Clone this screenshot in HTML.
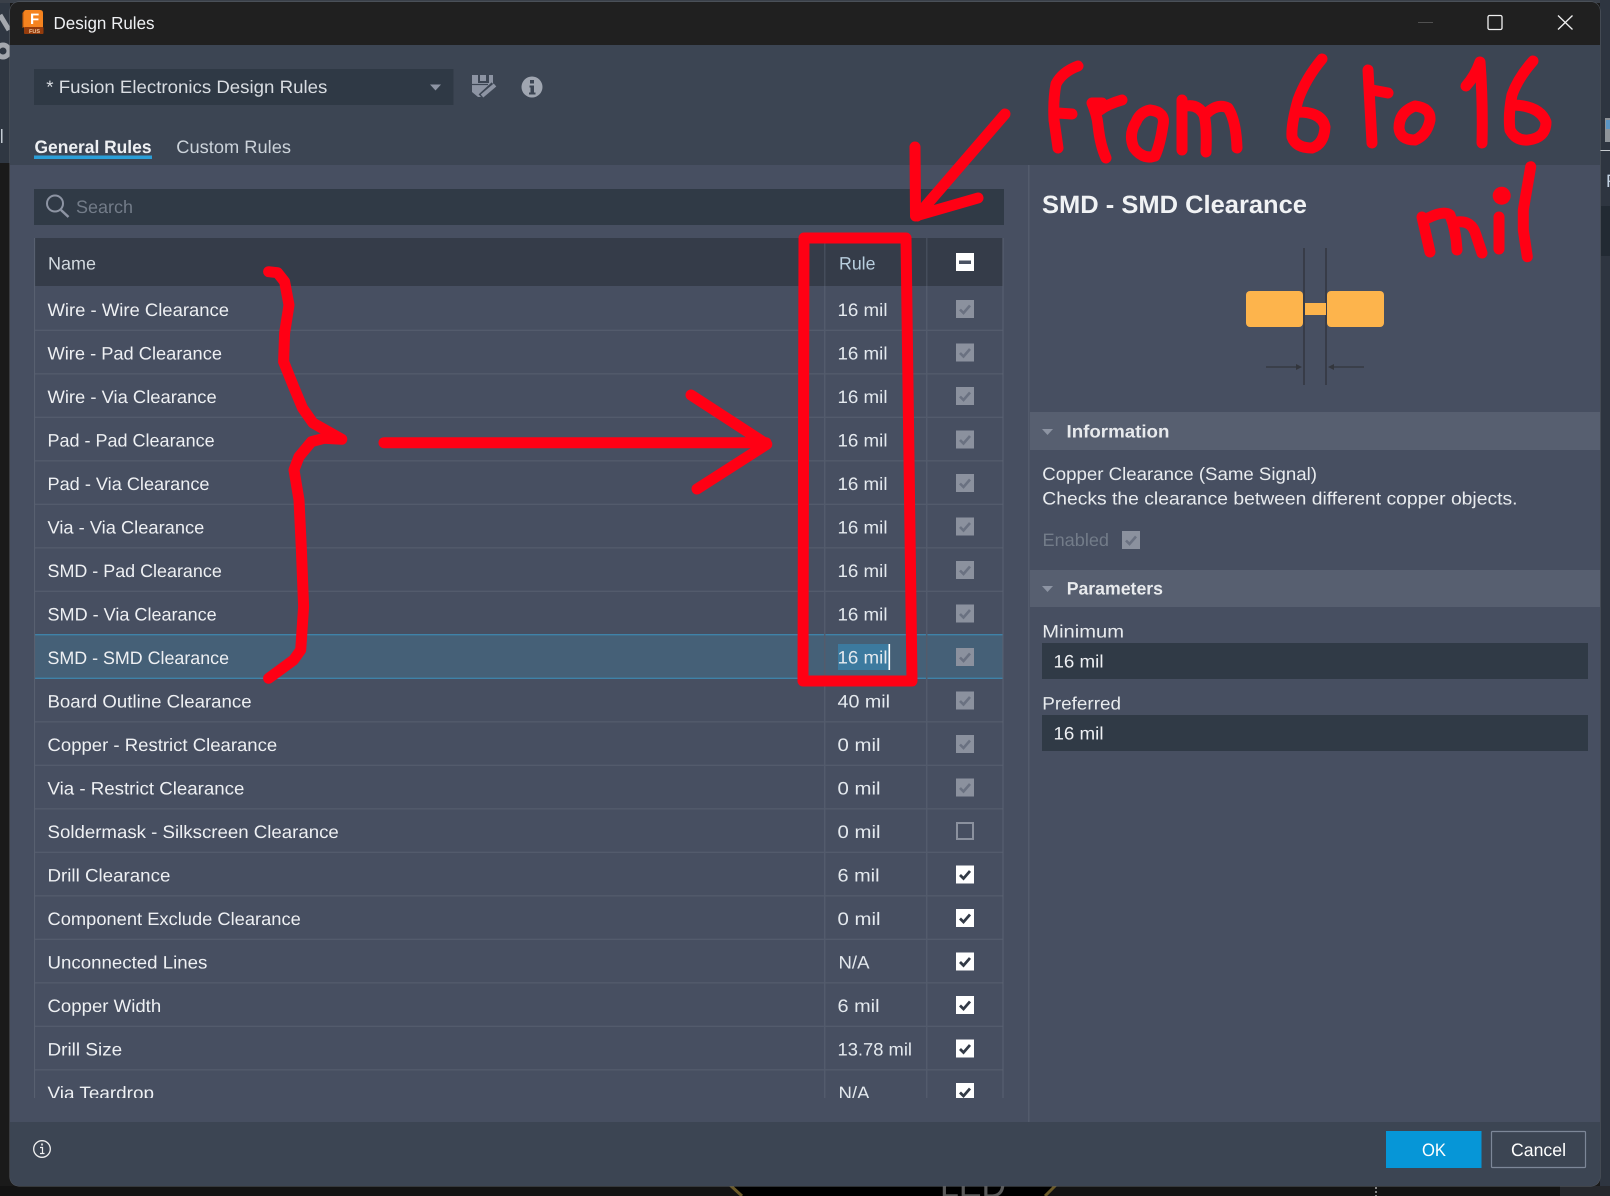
<!DOCTYPE html>
<html lang="en">
<head>
<meta charset="utf-8">
<title>Design Rules</title>
<style>
html,body{margin:0;padding:0;width:1610px;height:1196px;overflow:hidden;background:#1a1a1a}
svg{display:block}
text{font-family:"Liberation Sans",sans-serif;font-size:18px;fill:#eef0f3;text-rendering:geometricPrecision}
.b{font-weight:bold}
.v{fill:#e4e9ee}
.red{fill:none;stroke:#ff0014;stroke-width:11;stroke-linecap:round;stroke-linejoin:round}
.dis{fill:#8b919e}
.chk{fill:none;stroke:#6a7181;stroke-width:2.6}
.on{fill:#fff}
.chk2{fill:none;stroke:#323a46;stroke-width:2.8}
</style>
</head>
<body>
<svg xmlns="http://www.w3.org/2000/svg" width="1610" height="1196" viewBox="0 0 1610 1196">
<defs>
<clipPath id="dlg"><rect x="10" y="2" width="1590" height="1184" rx="9"/></clipPath>
<g id="d"><rect class="dis" x="956" y="0" width="18" height="18"/><path class="chk" d="M960 9.5L963.5 13L970 5.5"/></g>
<g id="c"><rect class="on" x="956" y="0" width="18" height="18"/><path class="chk2" d="M960 9.5L963.5 13L970 5.5"/></g>
</defs>

<!-- background behind the dialog -->
<rect width="1610" height="1196" fill="#1a1a1a"/>
<rect x="0" y="0" width="10" height="163" fill="#2f3742"/>
<rect x="0" y="0" width="1610" height="3" fill="#3a4049"/>
<path d="M0 15L9 30" stroke="#a4a8ae" stroke-width="5" fill="none"/>
<circle cx="3" cy="51" r="6" fill="none" stroke="#a4a8ae" stroke-width="5"/>
<rect x="1" y="129" width="1.5" height="14" fill="#c4ccd4"/>
<rect x="1600" y="0" width="10" height="1196" fill="#2e3540"/>
<rect x="1605" y="118" width="5" height="24" fill="#8f9499"/>
<rect x="1606" y="120" width="4" height="9" fill="#5b95c4"/>
<rect x="1600" y="150" width="10" height="1" fill="#c8ccd0"/>
<text x="1606" y="187" style="font-size:18px;fill:#c4d4e4">F</text>
<rect x="1601" y="206" width="9" height="50" fill="#222a33"/>
<rect x="1560" y="1186" width="50" height="10" fill="#26282d"/>
<rect x="0" y="1186" width="1560" height="10" fill="#131313"/>
<path d="M730 1186H1056L1045 1196H742Z" fill="#000"/>
<path d="M730 1185L742 1196M1056 1185L1045 1196" stroke="#6b5a28" stroke-width="3" fill="none"/>
<text x="940" y="1197" textLength="66" lengthAdjust="spacingAndGlyphs" style="font-size:36px;fill:#5a5a5a">LED</text>
<path d="M1376 1187V1196" stroke="#cfcfcf" stroke-width="1.2" stroke-dasharray="2 2" fill="none"/>
<rect x="9.5" y="1.5" width="1591" height="1185" rx="9.5" fill="#5a5f66"/>

<g clip-path="url(#dlg)">
<rect x="10" y="2" width="1590" height="1184" fill="#3c4553"/>
<rect x="10" y="2" width="1590" height="43" fill="#202020"/>
<rect x="10" y="165" width="1590" height="957" fill="#474f61"/>
<rect x="10" y="1122" width="1590" height="64" fill="#3c4553"/>
</g>

<!-- title bar -->
<path d="M24 12Q24 10 26 10H40Q43 10 43 13V28H24Z" fill="#f5831f"/>
<path d="M22.500 13L24 11V27L22.500 28Z" fill="#d96a12"/>
<rect x="24" y="27" width="19.500" height="7" rx="1" fill="#953c0c"/>
<text x="30" y="24" class="b" style="font-size:15px;fill:#fff">F</text>
<text x="29" y="33" class="b" style="font-size:5.500px;fill:#f0c8a0">FUS</text>
<text x="53.500" y="28.800" textLength="101" lengthAdjust="spacingAndGlyphs" style="font-size:17.500px">Design Rules</text>
<path d="M1418 22.500H1433" stroke="#505050" stroke-width="1"/>
<rect x="1488" y="15.500" width="14" height="14" rx="1.500" fill="none" stroke="#f0f0f0" stroke-width="1.300"/>
<path d="M1558 15.500L1572.500 29.500M1572.500 15.500L1558 29.500" stroke="#f0f0f0" stroke-width="1.300" fill="none"/>

<!-- toolbar -->
<rect x="34" y="69" width="419.500" height="36" fill="#2f3945"/>
<text x="46.300" y="93" textLength="281" lengthAdjust="spacingAndGlyphs" style="fill:#d9dde2">* Fusion Electronics Design Rules</text>
<path d="M430 84.500H441L435.500 90.500Z" fill="#8d94a3"/>
<path d="M472 75H493V86L483 97H478L472 92Z" fill="#8d94a3"/>
<rect x="478" y="75" width="11" height="8" fill="#3c4553"/>
<rect x="480" y="75" width="6" height="6" fill="#8d94a3"/>
<path d="M472 84.500H488" stroke="#3c4553" stroke-width="1.200" fill="none"/>
<path d="M481 97L494 85" stroke="#3c4553" stroke-width="7" fill="none"/>
<path d="M482 96L495 85" stroke="#8d94a3" stroke-width="4" fill="none"/>
<circle cx="532" cy="87" r="10.500" fill="#a0a6b1"/>
<rect x="530" y="80" width="4" height="3.500" fill="#3c4553"/>
<path d="M529.500 85.500H534V92.500H535.500V94.500H529V92.500H530.500V87.500H529.500Z" fill="#3c4553"/>

<!-- tabs -->
<text x="34.500" y="153" class="b" textLength="117" lengthAdjust="spacingAndGlyphs">General Rules</text>
<rect x="34" y="155.500" width="118" height="3.500" fill="#2b9fd8"/>
<text x="176.300" y="153" textLength="114.700" lengthAdjust="spacingAndGlyphs" style="fill:#ccd3da">Custom Rules</text>

<!-- search -->
<rect x="34" y="189" width="970" height="36" fill="#303a46"/>
<circle cx="55" cy="203.500" r="8" fill="none" stroke="#8d94a3" stroke-width="2"/>
<path d="M61 210L68.500 217" stroke="#8d94a3" stroke-width="2.500" fill="none"/>
<text x="76" y="213" textLength="57" lengthAdjust="spacingAndGlyphs" style="fill:#737c89">Search</text>

<!-- table header -->
<rect x="35" y="238" width="968" height="48" fill="#353c49"/>
<rect x="824" y="238" width="1.500" height="48" fill="#454d5b"/>
<rect x="926" y="238" width="1.500" height="48" fill="#454d5b"/>
<text x="48" y="269.300" textLength="48" lengthAdjust="spacingAndGlyphs" style="fill:#d3dae0">Name</text>
<text x="839" y="269.300" textLength="36.500" lengthAdjust="spacingAndGlyphs" style="fill:#b9cfdf">Rule</text>
<rect class="on" x="956" y="253" width="18" height="18"/>
<rect x="959" y="260.500" width="12" height="3.500" fill="#4a5262"/>

<!-- selected row -->
<rect x="35" y="634.700" width="968" height="43.600" fill="#456077"/>

<!-- table lines -->
<path d="M35 330.300H1003M35 373.800H1003M35 417.300H1003M35 460.800H1003M35 504.300H1003M35 547.800H1003M35 591.300H1003M35 721.800H1003M35 765.300H1003M35 808.800H1003M35 852.300H1003M35 895.800H1003M35 939.300H1003M35 982.800H1003M35 1026.300H1003M35 1069.800H1003" stroke="#535b6c" stroke-width="1.400" fill="none"/>
<path d="M35 634.700H1003M35 678.300H1003" stroke="#3f82a8" stroke-width="1.400" fill="none"/>
<path d="M824.700 286V1098M926.700 286V1098" stroke="#535b6c" stroke-width="1.500" fill="none"/>
<path d="M34.600 238V1098M1003 238V1098" stroke="#5a6272" stroke-width="1" fill="none"/>

<!-- rows: names -->
<text x="47.500" y="316" textLength="181.500" lengthAdjust="spacingAndGlyphs">Wire - Wire Clearance</text>
<text x="47.500" y="359.500" textLength="174.500" lengthAdjust="spacingAndGlyphs">Wire - Pad Clearance</text>
<text x="47.500" y="403" textLength="169.200" lengthAdjust="spacingAndGlyphs">Wire - Via Clearance</text>
<text x="47.500" y="446.500" textLength="167.100" lengthAdjust="spacingAndGlyphs">Pad - Pad Clearance</text>
<text x="47.500" y="490" textLength="162" lengthAdjust="spacingAndGlyphs">Pad - Via Clearance</text>
<text x="47.500" y="533.500" textLength="156.800" lengthAdjust="spacingAndGlyphs">Via - Via Clearance</text>
<text x="47.500" y="577" textLength="174.300" lengthAdjust="spacingAndGlyphs">SMD - Pad Clearance</text>
<text x="47.500" y="620.500" textLength="169.200" lengthAdjust="spacingAndGlyphs">SMD - Via Clearance</text>
<text x="47.500" y="664" textLength="181.500" lengthAdjust="spacingAndGlyphs">SMD - SMD Clearance</text>
<text x="47.500" y="707.500" textLength="204.100" lengthAdjust="spacingAndGlyphs">Board Outline Clearance</text>
<text x="47.500" y="751" textLength="229.700" lengthAdjust="spacingAndGlyphs">Copper - Restrict Clearance</text>
<text x="47.500" y="794.500" textLength="196.900" lengthAdjust="spacingAndGlyphs">Via - Restrict Clearance</text>
<text x="47.500" y="838" textLength="291.300" lengthAdjust="spacingAndGlyphs">Soldermask - Silkscreen Clearance</text>
<text x="47.500" y="881.500" textLength="122.900" lengthAdjust="spacingAndGlyphs">Drill Clearance</text>
<text x="47.500" y="925" textLength="253.300" lengthAdjust="spacingAndGlyphs">Component Exclude Clearance</text>
<text x="47.500" y="968.500" textLength="159.900" lengthAdjust="spacingAndGlyphs">Unconnected Lines</text>
<text x="47.500" y="1012" textLength="113.700" lengthAdjust="spacingAndGlyphs">Copper Width</text>
<text x="47.500" y="1055.500" textLength="74.700" lengthAdjust="spacingAndGlyphs">Drill Size</text>
<text x="47.500" y="1099" textLength="106.500" lengthAdjust="spacingAndGlyphs">Via Teardrop</text>

<!-- rows: values -->
<text class="v" x="837.500" y="316" textLength="50" lengthAdjust="spacingAndGlyphs">16 mil</text>
<text class="v" x="837.500" y="359.500" textLength="50" lengthAdjust="spacingAndGlyphs">16 mil</text>
<text class="v" x="837.500" y="403" textLength="50" lengthAdjust="spacingAndGlyphs">16 mil</text>
<text class="v" x="837.500" y="446.500" textLength="50" lengthAdjust="spacingAndGlyphs">16 mil</text>
<text class="v" x="837.500" y="490" textLength="50" lengthAdjust="spacingAndGlyphs">16 mil</text>
<text class="v" x="837.500" y="533.500" textLength="50" lengthAdjust="spacingAndGlyphs">16 mil</text>
<text class="v" x="837.500" y="577" textLength="50" lengthAdjust="spacingAndGlyphs">16 mil</text>
<text class="v" x="837.500" y="620.500" textLength="50" lengthAdjust="spacingAndGlyphs">16 mil</text>
<rect x="838" y="644" width="51" height="26" fill="#3c7a9f"/>
<text class="v" x="837.500" y="663.500" textLength="50" lengthAdjust="spacingAndGlyphs">16 mil</text>
<rect x="888.500" y="644" width="1.600" height="26" fill="#fff"/>
<text class="v" x="837.500" y="707.500" textLength="52.500" lengthAdjust="spacingAndGlyphs">40 mil</text>
<text class="v" x="837.500" y="751" textLength="43" lengthAdjust="spacingAndGlyphs">0 mil</text>
<text class="v" x="837.500" y="794.500" textLength="43" lengthAdjust="spacingAndGlyphs">0 mil</text>
<text class="v" x="837.500" y="838" textLength="43" lengthAdjust="spacingAndGlyphs">0 mil</text>
<text class="v" x="837.500" y="881.500" textLength="42" lengthAdjust="spacingAndGlyphs">6 mil</text>
<text class="v" x="837.500" y="925" textLength="43" lengthAdjust="spacingAndGlyphs">0 mil</text>
<text class="v" x="838.500" y="968.500" textLength="31" lengthAdjust="spacingAndGlyphs">N/A</text>
<text class="v" x="837.500" y="1012" textLength="42" lengthAdjust="spacingAndGlyphs">6 mil</text>
<text class="v" x="837.500" y="1055.500" textLength="74.500" lengthAdjust="spacingAndGlyphs">13.78 mil</text>
<text class="v" x="838.500" y="1099" textLength="31" lengthAdjust="spacingAndGlyphs">N/A</text>

<!-- rows: checkboxes -->
<use href="#d" y="300"/>
<use href="#d" y="343.500"/>
<use href="#d" y="387"/>
<use href="#d" y="430.500"/>
<use href="#d" y="474"/>
<use href="#d" y="517.500"/>
<use href="#d" y="561"/>
<use href="#d" y="604.500"/>
<use href="#d" y="648"/>
<use href="#d" y="691.500"/>
<use href="#d" y="735"/>
<use href="#d" y="778.500"/>
<rect x="957" y="823" width="16" height="16" fill="none" stroke="#8b919e" stroke-width="2"/>
<use href="#c" y="865.500"/>
<use href="#c" y="909"/>
<use href="#c" y="952.500"/>
<use href="#c" y="996"/>
<use href="#c" y="1039.500"/>
<use href="#c" y="1083"/>

<!-- clip bottom of table -->
<rect x="11" y="1098" width="1017" height="24" fill="#474f61"/>

<!-- right panel -->
<rect x="1028" y="165" width="1.500" height="957" fill="#535b6c"/>
<text x="1042" y="213" class="b" textLength="265" lengthAdjust="spacingAndGlyphs" style="font-size:25px;fill:#f0f2f4">SMD - SMD Clearance</text>
<path d="M1304 248V385M1326 248V385" stroke="#2e3138" stroke-width="1.200" fill="none"/>
<rect x="1246" y="291" width="57" height="36" rx="4" fill="#fdb44c"/>
<rect x="1327" y="291" width="57" height="36" rx="4" fill="#fdb44c"/>
<rect x="1305" y="303" width="21" height="12" fill="#fdb44c"/>
<path d="M1266 367H1298M1331 367H1364" stroke="#33363d" stroke-width="1.200" fill="none"/>
<path d="M1296 364L1302 367L1296 370ZM1334 364L1328 367L1334 370Z" fill="#33363d"/>

<rect x="1030" y="412" width="570" height="38" fill="#575f70"/>
<path d="M1042 429H1053L1047.500 435Z" fill="#8d94a3"/>
<text x="1066.500" y="437.500" class="b" textLength="102.900" lengthAdjust="spacingAndGlyphs" style="fill:#e8eaed">Information</text>
<text x="1042.300" y="480" textLength="274.700" lengthAdjust="spacingAndGlyphs" style="fill:#e8ebee">Copper Clearance (Same Signal)</text>
<text x="1042.300" y="504.300" textLength="475.200" lengthAdjust="spacingAndGlyphs" style="fill:#e8ebee">Checks the clearance between different copper objects.</text>
<text x="1042.500" y="546" textLength="66.500" lengthAdjust="spacingAndGlyphs" style="fill:#737c89">Enabled</text>
<use href="#d" x="166" y="531"/>

<rect x="1030" y="570" width="570" height="37" fill="#575f70"/>
<path d="M1042 586H1053L1047.500 592Z" fill="#8d94a3"/>
<text x="1066.700" y="594.300" class="b" textLength="96.300" lengthAdjust="spacingAndGlyphs" style="fill:#e8eaed">Parameters</text>
<text x="1042.300" y="637.300" textLength="81.700" lengthAdjust="spacingAndGlyphs" style="fill:#e8ebee">Minimum</text>
<rect x="1042" y="643" width="546" height="36" fill="#303a46"/>
<text x="1053.500" y="667.500" textLength="50" lengthAdjust="spacingAndGlyphs" style="fill:#eef0f3">16 mil</text>
<text x="1042.300" y="709.300" textLength="78.700" lengthAdjust="spacingAndGlyphs" style="fill:#e8ebee">Preferred</text>
<rect x="1042" y="715" width="546" height="36" fill="#303a46"/>
<text x="1053.500" y="739.500" textLength="50" lengthAdjust="spacingAndGlyphs" style="fill:#eef0f3">16 mil</text>

<!-- footer -->
<circle cx="42" cy="1149" r="8.300" fill="none" stroke="#f0f0f0" stroke-width="1.300"/>
<rect x="41.200" y="1143.500" width="1.600" height="2" fill="#f0f0f0"/>
<path d="M40 1147.500H42.500V1153M40 1153.500H44.500" stroke="#f0f0f0" stroke-width="1.200" fill="none"/>
<rect x="1386" y="1131" width="95.500" height="37" fill="#0696d7"/>
<text x="1422" y="1156" textLength="24" lengthAdjust="spacingAndGlyphs" style="fill:#fff">OK</text>
<rect x="1491.500" y="1131.500" width="94" height="36" rx="1" fill="none" stroke="#7d8798" stroke-width="1.200"/>
<text x="1511" y="1156" textLength="55" lengthAdjust="spacingAndGlyphs" style="fill:#fff">Cancel</text>

<!-- red annotations -->
<path class="red" d="M804 238L906 238L912 681L803 681Z"/>
<path class="red" d="M1005 114L917 216M915 147L915.500 216L978 198"/>
<path class="red" d="M268.600 271.700L277.500 272.700L284.600 281.700L289 305L284.600 333L283.600 361.700L293.600 386.700L302.500 408L313 423L341.800 439.300L324 438.300L311.400 441.700L299 456.700L294 470L299 500L301.400 550L303.600 606.700L300.700 650L293.600 660L268.600 678.300"/>
<path class="red" d="M384 442.700H766M691 395L766.800 444.300L697 489"/>
<path class="red" d="M1078 66Q1062 72 1056 84Q1053 100 1054 120L1058 148M1058 113L1072 114"/>
<path class="red" d="M1092 103Q1097 115 1098 125Q1100 145 1106 158M1092 103L1102 103M1100 110Q1108 104 1122 100"/>
<path class="red" d="M1150 110Q1166 112 1163 125Q1160 145 1155 156Q1143 160 1134 148Q1128 135 1136 122Q1140 112 1150 110Z"/>
<path class="red" d="M1182 100V150M1186 106Q1198 104 1204 115Q1207 125 1206 152M1207 113Q1218 103 1228 108Q1236 120 1237 148"/>
<path class="red" d="M1322 59Q1306 78 1298 100Q1291 125 1292 137Q1296 148 1312 148Q1324 144 1325 127Q1322 112 1298 112"/>
<path class="red" d="M1368 70L1372 143M1372 90L1388 93"/>
<path class="red" d="M1415 106Q1431 108 1430 120Q1427 135 1415 140Q1400 140 1399 128Q1399 112 1415 106Z"/>
<path class="red" d="M1466 86Q1475 76 1480 62Q1483 100 1482 143"/>
<path class="red" d="M1533 61Q1518 78 1512 95Q1508 115 1510 130Q1516 141 1528 140Q1546 138 1546 122Q1540 106 1514 105"/>
<path class="red" d="M1422 217L1430 252M1428 218Q1444 210 1450 215Q1456 230 1457 250M1457 222Q1472 220 1476 235L1482 253"/>
<path class="red" d="M1499 217V249"/>
<circle cx="1501.700" cy="195.700" r="9" fill="#ff0014"/>
<path class="red" d="M1530.700 166.700L1523.300 210L1523.300 230L1527.300 256.700"/>
</svg>
</body>
</html>
